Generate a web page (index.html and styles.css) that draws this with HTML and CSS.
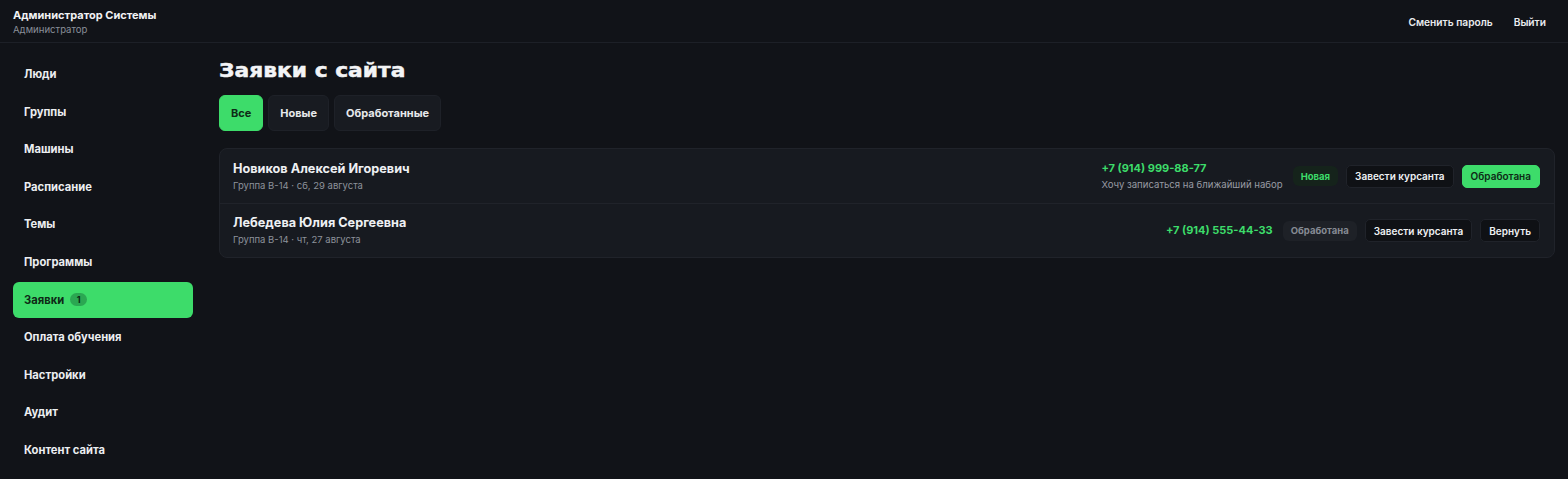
FILE: index.html
```html
<!DOCTYPE html>
<html lang="ru">
<head>
<meta charset="utf-8">
<title>Заявки с сайта</title>
<link rel="stylesheet" href="styles.css">
</head>
<body>
<header class="topbar">
  <div class="user">
    <div class="user-name">Администратор Системы</div>
    <div class="user-role">Администратор</div>
  </div>
  <nav class="top-actions">
    <a class="top-link">Сменить пароль</a>
    <a class="top-link">Выйти</a>
  </nav>
</header>
<div class="layout">
  <aside class="sidebar">
    <a class="nav-item">Люди</a>
    <a class="nav-item">Группы</a>
    <a class="nav-item">Машины</a>
    <a class="nav-item">Расписание</a>
    <a class="nav-item">Темы</a>
    <a class="nav-item">Программы</a>
    <a class="nav-item active">Заявки <span class="nav-badge">1</span></a>
    <a class="nav-item">Оплата обучения</a>
    <a class="nav-item">Настройки</a>
    <a class="nav-item">Аудит</a>
    <a class="nav-item">Контент сайта</a>
  </aside>
  <main class="content">
    <h1 class="title">Заявки с сайта</h1>
    <div class="tabs">
      <button class="tab active">Все</button>
      <button class="tab">Новые</button>
      <button class="tab">Обработанные</button>
    </div>
    <div class="list">
      <div class="row">
        <div class="row-main">
          <div class="row-name">Новиков Алексей Игоревич</div>
          <div class="row-sub">Группа B-14 · сб, 29 августа</div>
        </div>
        <div class="row-side">
          <div class="contact">
            <div class="phone">+7 (914) 999-88-77</div>
            <div class="note">Хочу записаться на ближайший набор</div>
          </div>
          <span class="status new">Новая</span>
          <button class="btn">Завести курсанта</button>
          <button class="btn primary">Обработана</button>
        </div>
      </div>
      <div class="row">
        <div class="row-main">
          <div class="row-name">Лебедева Юлия Сергеевна</div>
          <div class="row-sub">Группа B-14 · чт, 27 августа</div>
        </div>
        <div class="row-side">
          <div class="contact">
            <div class="phone">+7 (914) 555-44-33</div>
          </div>
          <span class="status done">Обработана</span>
          <button class="btn">Завести курсанта</button>
          <button class="btn">Вернуть</button>
        </div>
      </div>
    </div>
  </main>
</div>
</body>
</html>
```
FILE: styles.css
```css
* { box-sizing: border-box; }
html, body { margin: 0; padding: 0; }
body {
  background: #111318;
  color: #eef0f3;
  font-family: Inter, "Noto Sans", sans-serif;
  font-size: 12px;
  height: 479px;
  overflow: hidden;
}
.topbar {
  height: 43px;
  border-bottom: 1px solid #1d2027;
  display: flex;
  align-items: center;
  justify-content: space-between;
  padding: 2px 22px 0 13px;
}
.user-name { font-weight: 700; font-size: 11px; line-height: 14px; color: #f1f2f4; }
.user-role { font-size: 9.6px; line-height: 13px; color: #8a8f99; margin-top: 1px; }
.top-actions { display: flex; gap: 21px; }
.top-link { font-size: 10.2px; font-weight: 600; color: #e9ebee; }

.layout { display: flex; }
.sidebar {
  width: 180px;
  margin-left: 13px;
  padding-top: 13px;
  display: flex;
  flex-direction: column;
  gap: 1.6px;
}
.nav-item {
  height: 36px;
  display: flex;
  align-items: center;
  gap: 6px;
  padding: 0 11px;
  border-radius: 6px;
  font-size: 11.2px;
  font-weight: 700;
  color: #eceef1;
}
.nav-item.active { background: #3ddc6a; color: #0e2a16; }
.nav-badge {
  display: inline-flex; align-items: center; justify-content: center;
  min-width: 17px; height: 13px; padding: 0 5px;
  border-radius: 7px;
  background: #2ba752;
  color: #0d2914;
  font-size: 9px; font-weight: 700;
}
.content { flex: 1; margin-left: 26px; margin-right: 13px; padding-top: 14px; }
.title {
  margin: 0;
  display: inline-block;
  font-family: "DejaVu Sans", sans-serif;
  font-weight: 700;
  font-size: 20px;
  line-height: 26px;
  letter-spacing: 0;
  color: #f3f4f6;
  -webkit-text-stroke: 0.5px #f3f4f6;
  transform: scaleX(1.09);
  transform-origin: left center;
}
.tabs { display: flex; gap: 5px; margin-top: 12px; }
.tab {
  height: 36px;
  padding: 0 11px;
  border-radius: 6px;
  border: 1px solid #1e2128;
  background: #181b21;
  color: #e7e9ec;
  font-family: inherit;
  font-size: 11px;
  font-weight: 700;
}
.tab.active { background: #3ddc6a; color: #0e2a16; border-color: #3ddc6a; }

.list {
  margin-top: 17px;
  border: 1px solid #20232a;
  border-radius: 8px;
  background: #171a20;
  overflow: hidden;
}
.row {
  height: 54px;
  display: flex;
  align-items: center;
  justify-content: space-between;
  padding: 0 14px 0 13px;
}
.row + .row { border-top: 1px solid #20232a; }
.row-name { font-size: 12.7px; font-weight: 700; line-height: 16px; color: #eef0f3; }
.row-sub { font-size: 9.5px; line-height: 13px; color: #8d929b; margin-top: 2px; }
.row-side { display: flex; align-items: center; gap: 8px; }
.contact { margin-right: 2px; }
.phone { font-size: 11px; font-weight: 700; color: #3ddc6a; line-height: 15px; }
.note { font-size: 9.6px; color: #979ba3; line-height: 13px; margin-top: 2px; }
.status {
  height: 20px;
  display: inline-flex; align-items: center;
  padding: 0 8px;
  border-radius: 6px;
  font-size: 9.5px; font-weight: 700;
}
.status.new { background: #15231b; color: #3ddc6a; }
.status.done { background: #1e2127; color: #868b94; }
.btn {
  height: 23px;
  padding: 0 8px;
  border-radius: 5px;
  border: 1px solid #20232a;
  background: #0f1115;
  color: #eef0f3;
  font-family: inherit;
  font-size: 10px;
  font-weight: 600;
}
.btn.primary { background: #3ddc6a; border-color: #3ddc6a; color: #0e2a16; }
```
